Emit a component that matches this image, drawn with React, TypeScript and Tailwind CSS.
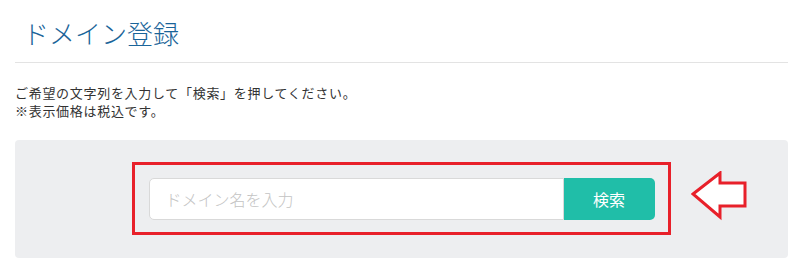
const font = { fontFamily: '"Noto Sans CJK JP", "Noto Sans", sans-serif' };

const App = () => {
  return (
    <div className="min-h-screen bg-white px-[15px] pr-[12px]" style={font}>
      <h1 className="pt-[13px] pb-[10px] pl-[8px] text-[26px] leading-[39px] font-light text-[#1a6499] border-b border-[#e3e3e3]">
        ドメイン登録
      </h1>

      <p className="mt-[21px] text-[13px] leading-[18px] tracking-[0.7px] text-[#333]">
        ご希望の文字列を入力して「検索」を押してください。
        <br />
        ※表示価格は税込です。
      </p>

      <div className="mt-[20px] rounded-[4px] bg-[#edeef0] py-[38px] flex justify-center">
        <div className="relative flex w-[506px] h-[42px]">
          <input
            type="text"
            placeholder="ドメイン名を入力"
            className="flex-1 min-w-0 h-full rounded-l-[5px] border border-[#d9d9d9] bg-white pl-4 text-[16px] font-light text-[#333] placeholder:text-[#c3c3c3] outline-none"
            style={font}
          />
          <button className="w-[91px] h-full rounded-r-[5px] bg-[#20bea8] text-white text-[16px]">
            検索
          </button>

          {/* annotation frame */}
          <div className="pointer-events-none absolute -left-[17px] -top-[16px] -right-[16px] -bottom-[15px] border-[3px] border-[#e8202a]" />
          {/* annotation arrow */}
          <svg
            className="absolute left-[542px] -top-[7px]"
            width="58"
            height="50"
            viewBox="0 0 58 50"
          >
            <path
              d="M2 23 L29 2 L29 12 L54 12 L54 35 L29 35 L29 46 Z"
              fill="white"
              stroke="#e8202a"
              strokeWidth="3"
              strokeLinejoin="miter"
            />
          </svg>
        </div>
      </div>
    </div>
  );
};

export default App;
